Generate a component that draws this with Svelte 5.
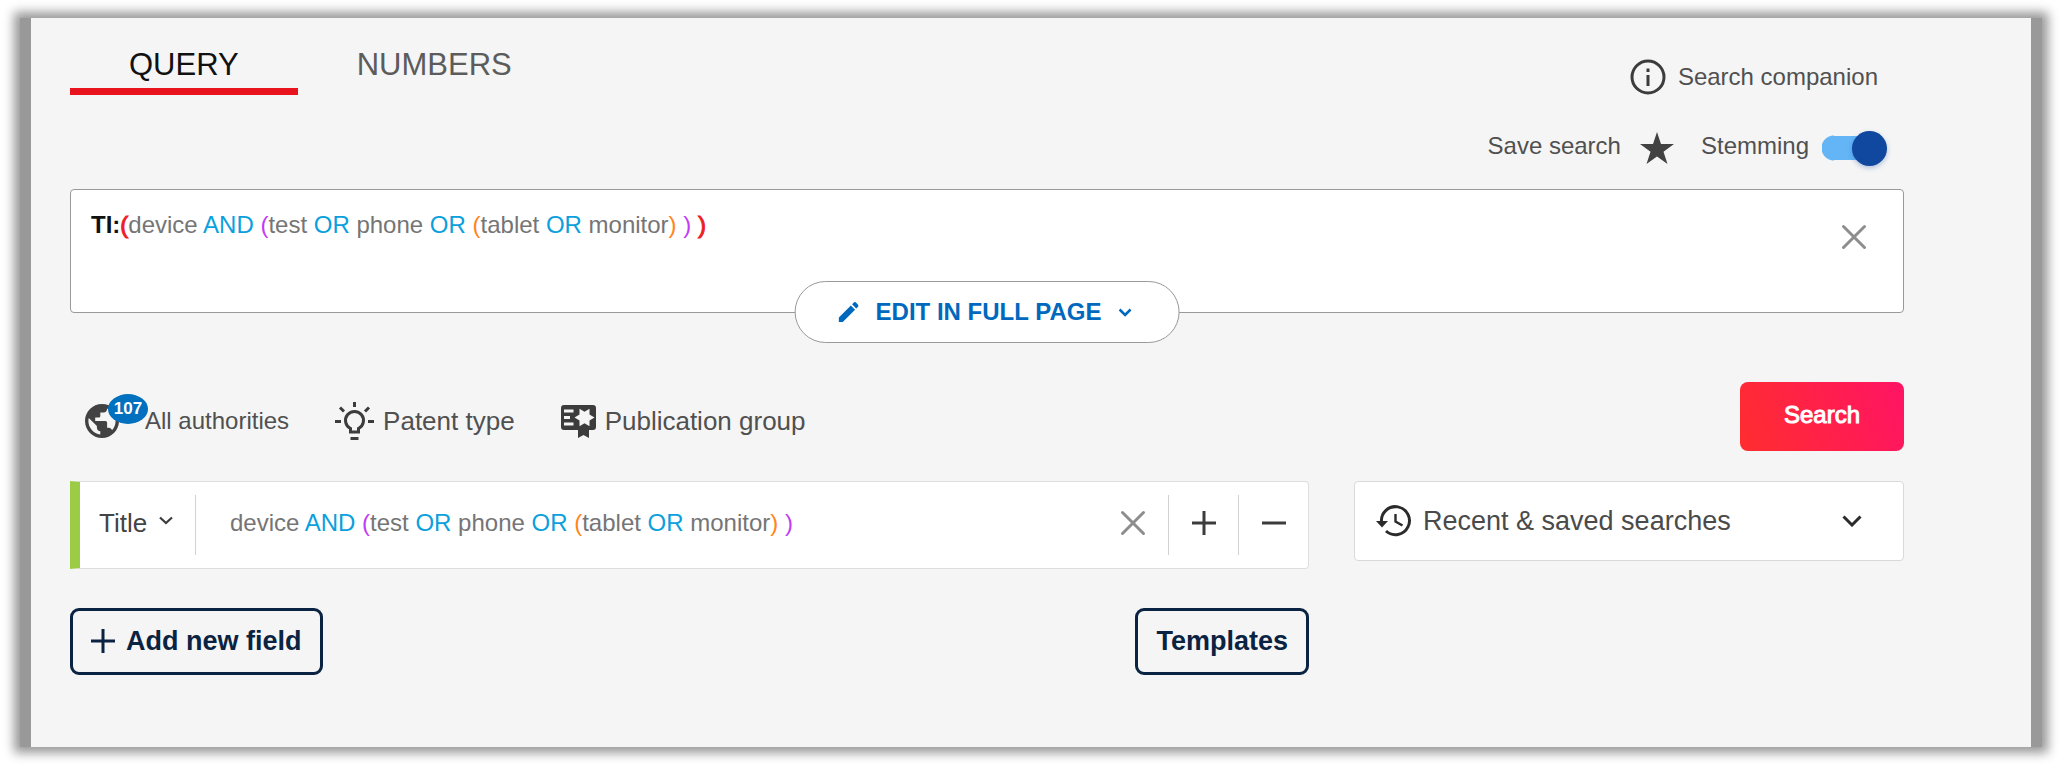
<script lang="ts">
  type Token = { text: string; kind: string };

  let field = $state("device AND (test OR phone OR (tablet OR monitor) )");
  let stemming = $state(true);
  let tab = $state("query");

  const parens = ["red", "purple", "orange"];

  function tokenize(str: string, depth = 0): Token[] {
    const parts = str.match(/TI:|\bAND\b|\bOR\b|\bNOT\b|[()]|\s+|[^\s()]+/g) ?? [];
    return parts.map((text) => {
      if (text === "(") return { text, kind: parens[depth++ % 3] };
      if (text === ")") return { text, kind: parens[Math.max(--depth, 0) % 3] };
      if (text === "TI:") return { text, kind: "code" };
      if (/^(AND|OR|NOT)$/.test(text)) return { text, kind: "op" };
      return { text, kind: "term" };
    });
  }

  let query = $derived(field ? `TI:(${field} )` : "");
</script>

{#snippet highlight(tokens: Token[])}
  <div class="highlight" aria-hidden="true">
    {#each tokens as t}<span class={t.kind}>{t.text}</span>{/each}
  </div>
{/snippet}

{#snippet cross()}
  <svg width="26" height="26" viewBox="0 0 26 26">
    <path d="M2.5 2.5l21 21M23.5 2.5l-21 21" stroke="#8d8d8d" stroke-width="3" stroke-linecap="round" />
  </svg>
{/snippet}

<div class="frame">
  <main class="panel">
    <header>
      <div class="tabs" role="tablist">
        <button role="tab" class="tab" class:active={tab === "query"} aria-selected={tab === "query"} onclick={() => (tab = "query")}>QUERY</button>
        <button role="tab" class="tab" class:active={tab === "numbers"} aria-selected={tab === "numbers"} onclick={() => (tab = "numbers")}>NUMBERS</button>
      </div>
      <button class="companion">
        <svg width="36" height="36" viewBox="0 0 36 36">
          <circle cx="18" cy="18" r="16" fill="none" stroke="#3c3c3c" stroke-width="3" />
          <path d="M16.5 9.5h3v3.5h-3zM16.5 16h3v11h-3z" fill="#3c3c3c" />
        </svg>
        Search companion
      </button>
    </header>

    <div class="tools">
      <button class="save">
        <span class="tool-label">Save search</span>
        <svg width="34" height="32" viewBox="0 0 34 32">
          <path d="M17 0l4 12h13l-10.500 7.800L27.500 32 17 24.600 6.500 32l4-12.200L0 12h13z" fill="#424242" />
        </svg>
      </button>
      <label class="stemming">
        <span class="tool-label">Stemming</span>
        <input type="checkbox" role="switch" bind:checked={stemming} />
      </label>
    </div>

    <div class="query-box">
      <div class="editor">
        {@render highlight(tokenize(query))}
        <textarea aria-label="Query" value={query} readonly></textarea>
      </div>
      <button class="clear" aria-label="Clear query" onclick={() => (field = "")}>{@render cross()}</button>
      <button class="full-page">
        <svg width="20" height="20" viewBox="3 3 18 18">
          <path d="M3 17.250V21h3.750L17.810 9.940l-3.750-3.750L3 17.250zM20.710 7.040a1 1 0 0 0 0-1.410l-2.340-2.340a1 1 0 0 0-1.410 0l-1.830 1.830 3.750 3.750 1.830-1.830z" fill="#0068bd" />
        </svg>
        EDIT IN FULL PAGE
        <svg width="13" height="9" viewBox="0 0 13 9">
          <path d="M1 1.500l5.500 5.500L12 1.500" fill="none" stroke="#0068bd" stroke-width="2.500" />
        </svg>
      </button>
    </div>

    <div class="actions">
      <div class="filters">
        <button class="filter authorities">
          <svg width="34" height="34" viewBox="2 2 20 20">
            <path d="M12 2C6.480 2 2 6.480 2 12s4.480 10 10 10 10-4.480 10-10S17.520 2 12 2zm-1 17.930c-3.950-.490-7-3.850-7-7.930 0-.620.080-1.210.210-1.790L9 15v1c0 1.100.900 2 2 2v1.930zm6.900-2.540c-.260-.810-1-1.390-1.900-1.390h-1v-3c0-.550-.450-1-1-1H8v-2h2c.550 0 1-.450 1-1V7h2c1.100 0 2-.900 2-2v-.410c2.930 1.190 5 4.060 5 7.410 0 2.080-.800 3.970-2.100 5.390z" fill="#424242" />
          </svg>
          <span class="badge">107</span>
          All authorities
        </button>
        <button class="filter">
          <svg width="39" height="38" viewBox="0 0 39 38" fill="none" stroke="#3c3c3c" stroke-width="3">
            <path d="M15.500 30v-3.500a9 9 0 1 1 8 0V30z" />
            <path d="M15.500 36.500h8M19.500 0v5M0 19.500h6M33 19.500h6M5 5.500l4 4M34 5.500l-4 4" />
          </svg>
          Patent type
        </button>
        <button class="filter">
          <svg width="35" height="33" viewBox="0 0 35 33">
            <path d="M3 0h29a3 3 0 0 1 3 3v19a3 3 0 0 1-3 3h-4v8l-5.500-3-5.500 3v-8H3a3 3 0 0 1-3-3V3a3 3 0 0 1 3-3z" fill="#3c3c3c" />
            <path d="M3 4.500h9.500v3H3zM3 11h6v3H3zM3 17.500h9.500v3H3z" fill="#f5f5f5" />
            <path d="M33.500 12.500l-5 2.900v5.800l-5-2.900-5 2.900v-5.800l-5-2.900 5-2.900V3.800l5 2.900 5-2.900v5.800z" fill="#f5f5f5" />
          </svg>
          Publication group
        </button>
      </div>
      <button class="search">Search</button>
    </div>

    <div class="columns">
      <section>
        <div class="field">
          <div class="field-type">
            <select aria-label="Field">
              <option>Title</option>
            </select>
            <svg width="14" height="9" viewBox="0 0 14 9">
              <path d="M1 1.500l6 5.500 6-5.500" fill="none" stroke="#3c3c3c" stroke-width="2.200" />
            </svg>
          </div>
          <div class="editor field-input">
            {@render highlight(tokenize(field, 1))}
            <input type="text" aria-label="Title" bind:value={field} />
          </div>
          <button class="cell" aria-label="Clear field" onclick={() => (field = "")}>{@render cross()}</button>
          <button class="cell ruled" aria-label="Add row">
            <svg width="24" height="24" viewBox="0 0 24 24"><path d="M12 0v24M0 12h24" stroke="#3c3c3c" stroke-width="3" /></svg>
          </button>
          <button class="cell ruled" aria-label="Remove row">
            <svg width="24" height="24" viewBox="0 0 24 24"><path d="M0 12h24" stroke="#3c3c3c" stroke-width="3" /></svg>
          </button>
        </div>
        <div class="field-actions">
          <button class="outline">
            <svg width="24" height="24" viewBox="0 0 24 24"><path d="M12 0v24M0 12h24" stroke="#0a2342" stroke-width="3" /></svg>
            Add new field
          </button>
          <button class="outline">Templates</button>
        </div>
      </section>
      <button class="recent">
        <svg width="36" height="32" viewBox="0 0 36 32" fill="none" stroke="#2b2b2b" stroke-width="3">
          <path d="M5.500 17a14 14 0 1 1 4.500 9" />
          <path d="M19.500 9v7.500l7 4" stroke-width="2.400" />
          <path d="M0 16h12l-6 6.500z" fill="#2b2b2b" stroke="none" />
        </svg>
        <span>Recent &amp; saved searches</span>
        <svg width="20" height="12" viewBox="0 0 20 12">
          <path d="M1.500 1.500L10 10l8.500-8.500" fill="none" stroke="#2b2b2b" stroke-width="3" />
        </svg>
      </button>
    </div>
  </main>
</div>

<style>
  :global(body) {
    background: #fff;
    overflow-x: hidden;
  }
  .frame {
    margin: 18px 20px;
    padding: 0 11px;
    background: #999;
    box-shadow: 0 0 10px 6px #999;
  }
  .panel {
    padding: 29px 127px 72px 39px;
    background: #f5f5f5;
    color: #505050;
    font-family: "Liberation Sans", Arial, sans-serif;
    font-size: 24px;
    line-height: 28px;
  }
  button,
  input,
  select,
  textarea {
    margin: 0;
    padding: 0;
    border: 0;
    background: none;
    color: inherit;
    font: inherit;
  }
  button {
    display: flex;
    align-items: center;
    cursor: pointer;
  }
  svg {
    display: block;
    flex: none;
  }

  header {
    display: flex;
    justify-content: space-between;
    align-items: flex-end;
  }
  .tabs {
    display: flex;
  }
  .tab {
    padding: 0 59px 5px;
    border-bottom: 7px solid transparent;
    color: #5c5c5c;
    font-size: 31px;
    line-height: 36px;
  }
  .tab.active {
    border-color: #e8131d;
    color: #111;
  }
  .companion {
    gap: 12px;
    margin-right: 26px;
  }
  .tools {
    display: flex;
    justify-content: flex-end;
    gap: 27px;
    margin: 35px 17px 23px 0;
  }
  .tool-label {
    padding-bottom: 4px;
  }
  .save {
    gap: 19px;
  }
  .stemming {
    display: flex;
    align-items: center;
    gap: 13px;
  }
  .stemming input {
    appearance: none;
    display: flex;
    align-items: center;
    width: 65px;
    height: 36px;
    background: linear-gradient(#b5b5b5, #b5b5b5) left center / 52px 24px no-repeat;
    border-radius: 12px;
    cursor: pointer;
  }
  .stemming input::before {
    content: "";
    width: 35px;
    height: 35px;
    border-radius: 50%;
    background: #fff;
    box-shadow: 0 2px 5px rgba(16, 71, 159, 0.3);
  }
  .stemming input:checked {
    background: radial-gradient(circle at 12px 18px, #64b5f6 12px, transparent 13px) left / 12px 36px no-repeat,
      linear-gradient(#64b5f6, #64b5f6) 12px center / 36px 24px no-repeat;
    border-radius: 0;
  }
  .stemming input:checked::before {
    margin-left: 30px;
    background: #10479f;
  }

  .query-box {
    position: relative;
    display: flex;
    align-items: flex-start;
    justify-content: space-between;
    min-height: 67px;
    padding: 21px 36px 34px 20px;
    border: 1px solid #999;
    border-radius: 4px;
    background: #fff;
  }
  .editor {
    display: grid;
    flex: 1;
    min-width: 0;
  }
  .editor > :global(*) {
    grid-area: 1 / 1;
  }
  .highlight {
    color: #757575;
    white-space: pre-wrap;
    pointer-events: none;
  }
  .editor textarea,
  .editor input {
    width: 100%;
    color: transparent;
    caret-color: #333;
    outline: none;
    resize: none;
    overflow: hidden;
  }
  .code {
    color: #111;
    font-weight: bold;
  }
  .op {
    color: #0c9fdd;
  }
  .red {
    color: #ed1c24;
    -webkit-text-stroke: 1px #ed1c24;
  }
  .purple {
    color: #c23cf5;
  }
  .orange {
    color: #ff8519;
  }
  .clear {
    margin-top: 13px;
  }
  .full-page {
    position: absolute;
    left: 50%;
    bottom: -31px;
    gap: 17px;
    height: 62px;
    padding: 0 47px 0 43px;
    border: 1px solid #999;
    border-radius: 31px;
    background: #fff;
    color: #0068bd;
    font-weight: bold;
    white-space: nowrap;
    transform: translateX(-50%);
  }

  .actions {
    display: flex;
    justify-content: space-between;
    margin: 69px 0 30px;
  }
  .filters {
    display: flex;
    gap: 46px;
    padding: 9px 0 0 15px;
  }
  .filter {
    gap: 9px;
    font-size: 26px;
  }
  .authorities {
    position: relative;
    gap: 26px;
    font-size: 24px;
  }
  .badge {
    position: absolute;
    left: 23px;
    top: 3px;
    width: 40px;
    height: 30px;
    border-radius: 50%;
    background: #0070bf;
    color: #fff;
    font-size: 17px;
    font-weight: bold;
    line-height: 29px;
    text-align: center;
  }
  .search {
    height: 69px;
    padding: 0 44px 4px;
    border-radius: 8px;
    background: linear-gradient(70deg, #ff2d2f, #ff1464);
    color: #fff;
    -webkit-text-stroke: 1px #fff;
  }

  .columns {
    display: grid;
    grid-template-columns: minmax(0, 1fr) 550px;
    align-items: start;
    gap: 45px;
  }
  .field {
    display: flex;
    align-items: center;
    height: 86px;
    border: 1px solid #dedede;
    border-left: 10px solid #9ccc46;
    border-radius: 0 4px 4px 0;
    background: #fff;
  }
  .field-type {
    display: grid;
    align-items: center;
    width: 115px;
    height: 60px;
    border-right: 1px solid #d2d2d2;
  }
  .field-type > * {
    grid-area: 1 / 1;
  }
  .field-type select {
    appearance: none;
    height: 60px;
    padding: 0 0 5px 19px;
    font-size: 26px;
    color: #444;
  }
  .field-type svg {
    justify-self: end;
    margin: 0 22px 9px 0;
    pointer-events: none;
  }
  .field-input {
    padding: 0 0 5px 34px;
  }
  .cell {
    justify-content: center;
    width: 70px;
    height: 60px;
    padding-bottom: 4px;
    box-sizing: border-box;
  }
  .ruled {
    border-left: 1px solid #d2d2d2;
  }
  .field-actions {
    display: flex;
    justify-content: space-between;
    margin-top: 39px;
  }
  .outline {
    gap: 11px;
    height: 67px;
    padding: 0 18px 2px;
    border: 3px solid #0a2342;
    border-radius: 9px;
    color: #0a2342;
    font-size: 27px;
    font-weight: bold;
  }
  .recent {
    gap: 11px;
    height: 80px;
    padding: 0 41px 0 21px;
    border: 1px solid #d9d9d9;
    border-radius: 4px;
    background: #fff;
    color: #4a4a4a;
    font-size: 27px;
  }
  .recent span {
    flex: 1;
    text-align: left;
  }
</style>
